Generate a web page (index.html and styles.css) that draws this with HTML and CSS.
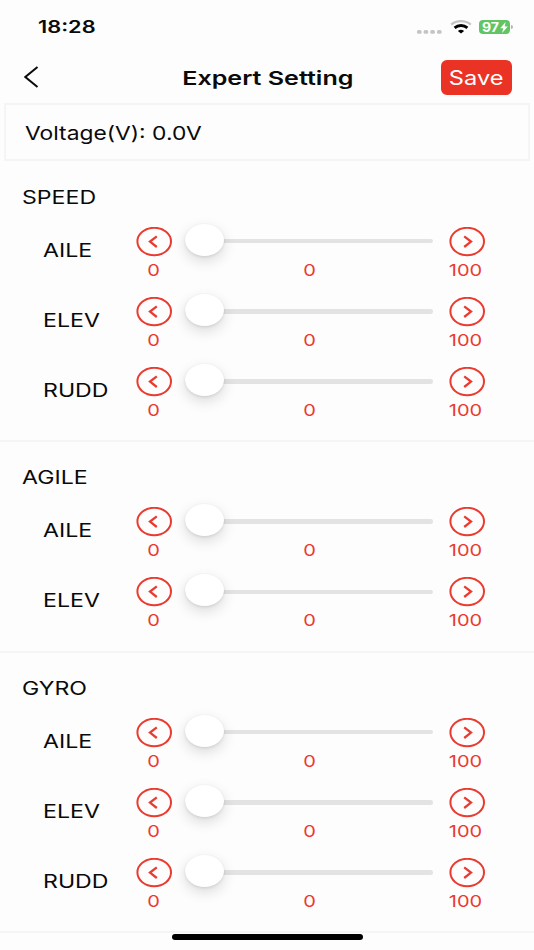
FILE: index.html
```html
<!DOCTYPE html>
<html lang="en">
<head>
    <meta charset="UTF-8">
    <meta name="viewport" content="width=device-width, initial-scale=1.0">
    <title>Expert Setting</title>
    <link rel="stylesheet" href="styles.css">
</head>
<body>
<svg class="symbols">
    <symbol id="icon-prev" viewBox="0 0 36 30">
        <ellipse cx="18.2" cy="14.5" rx="16.8" ry="13.7"/>
        <path d="M20.8 9.4L14 14.6l6.8 5.4" stroke-width="2.3"/>
    </symbol>
    <symbol id="icon-next" viewBox="0 0 36 30">
        <ellipse cx="18.2" cy="14.5" rx="16.8" ry="13.7"/>
        <path d="M15.2 9.400l6.800 5.200-6.800 5.400" stroke-width="2.3"/>
    </symbol>
</svg>

<div class="status-bar">
    <span class="time text">18:28</span>
    <div class="status-icons">
        <svg class="signal" width="25" height="4" viewBox="0 0 25 4">
            <rect x="0" y="0" width="4.600" height="3.800" rx="1.600"/>
            <rect x="6.600" y="0" width="4.600" height="3.800" rx="1.600"/>
            <rect x="13.300" y="0" width="4.600" height="3.800" rx="1.600"/>
            <rect x="20" y="0" width="4.600" height="3.800" rx="1.600"/>
        </svg>
        <svg class="wifi" width="22" height="14" viewBox="0 0 22 14">
            <path d="M1.200 4.600C6.500 0 15.500 0 20.800 4.600" stroke="#c4c4c6"/>
            <path d="M4.600 7.900C8.200 4.700 13.800 4.700 17.400 7.900" stroke="#000" stroke-width="2.800"/>
            <path d="M7.900 10.900Q11 8.600 14.100 10.900L11 13.600z" fill="#000"/>
        </svg>
        <div class="battery">
            <span class="battery-text text">97</span>
            <svg width="8" height="11" viewBox="0 0 8 11"><path d="M5.600 0L.2 6.200h3L2.100 11l5.700-6.500H4.700z" fill="#fff"/></svg>
        </div>
        <span class="battery-cap"></span>
    </div>
</div>

<div class="nav-bar">
    <svg class="back" width="15" height="22" viewBox="0 0 15 22"><path d="M13.500 1L1.300 11l12.200 10"/></svg>
    <h1 class="nav-title"><span class="text">Expert Setting</span></h1>
    <button class="save"><span class="text">Save</span></button>
</div>

<div class="voltage"><span class="text">Voltage(V): 0.0V</span></div>

<div class="section">
    <h2 class="section-title"><span class="text">SPEED</span></h2>
    <div class="row">
        <span class="label text">AILE</span>
        <div class="control">
            <svg class="step"><use href="#icon-prev"/></svg>
            <div class="slider"><span class="thumb"></span></div>
            <svg class="step"><use href="#icon-next"/></svg>
            <span class="value text">0</span><span class="value text">0</span><span class="value text">100</span>
        </div>
    </div>
    <div class="row">
        <span class="label text">ELEV</span>
        <div class="control">
            <svg class="step"><use href="#icon-prev"/></svg>
            <div class="slider"><span class="thumb"></span></div>
            <svg class="step"><use href="#icon-next"/></svg>
            <span class="value text">0</span><span class="value text">0</span><span class="value text">100</span>
        </div>
    </div>
    <div class="row">
        <span class="label text">RUDD</span>
        <div class="control">
            <svg class="step"><use href="#icon-prev"/></svg>
            <div class="slider"><span class="thumb"></span></div>
            <svg class="step"><use href="#icon-next"/></svg>
            <span class="value text">0</span><span class="value text">0</span><span class="value text">100</span>
        </div>
    </div>
</div>

<div class="section">
    <h2 class="section-title"><span class="text">AGILE</span></h2>
    <div class="row">
        <span class="label text">AILE</span>
        <div class="control">
            <svg class="step"><use href="#icon-prev"/></svg>
            <div class="slider"><span class="thumb"></span></div>
            <svg class="step"><use href="#icon-next"/></svg>
            <span class="value text">0</span><span class="value text">0</span><span class="value text">100</span>
        </div>
    </div>
    <div class="row">
        <span class="label text">ELEV</span>
        <div class="control">
            <svg class="step"><use href="#icon-prev"/></svg>
            <div class="slider"><span class="thumb"></span></div>
            <svg class="step"><use href="#icon-next"/></svg>
            <span class="value text">0</span><span class="value text">0</span><span class="value text">100</span>
        </div>
    </div>
</div>

<div class="section">
    <h2 class="section-title"><span class="text">GYRO</span></h2>
    <div class="row">
        <span class="label text">AILE</span>
        <div class="control">
            <svg class="step"><use href="#icon-prev"/></svg>
            <div class="slider"><span class="thumb"></span></div>
            <svg class="step"><use href="#icon-next"/></svg>
            <span class="value text">0</span><span class="value text">0</span><span class="value text">100</span>
        </div>
    </div>
    <div class="row">
        <span class="label text">ELEV</span>
        <div class="control">
            <svg class="step"><use href="#icon-prev"/></svg>
            <div class="slider"><span class="thumb"></span></div>
            <svg class="step"><use href="#icon-next"/></svg>
            <span class="value text">0</span><span class="value text">0</span><span class="value text">100</span>
        </div>
    </div>
    <div class="row">
        <span class="label text">RUDD</span>
        <div class="control">
            <svg class="step"><use href="#icon-prev"/></svg>
            <div class="slider"><span class="thumb"></span></div>
            <svg class="step"><use href="#icon-next"/></svg>
            <span class="value text">0</span><span class="value text">0</span><span class="value text">100</span>
        </div>
    </div>
</div>

<div class="home-indicator"></div>
</body>
</html>
```

FILE: styles.css
```css
* {
    box-sizing: border-box;
}
body {
    position: relative;
    margin: 0;
    height: 950px;
    overflow: hidden;
    background-color: #fdfdfd;
    color: #0a0a0a;
    font-family: Inter, "Liberation Sans", sans-serif;
    font-size: 18.5px;
}
.symbols {
    display: none;
}
/* wide lettering */
.text {
    display: inline-block;
    transform: scaleX(1.25);
    transform-origin: left center;
    white-space: nowrap;
}
.status-bar {
    display: flex;
    justify-content: space-between;
    height: 54px;
    padding: 0 21px 0 38px;
}
.time {
    font-size: 17px;
    font-weight: 600;
    line-height: 55px;
    transform: scaleX(1.28);
}
.status-icons {
    display: flex;
    align-items: center;
    height: 54px;
}
.signal {
    margin: 9px 8px 0 0;
    fill: #c4c4c6;
}
.wifi {
    margin-right: 7px;
    fill: none;
    stroke-width: 2.2;
}
.battery {
    display: flex;
    align-items: center;
    width: 31px;
    height: 14px;
    padding-left: 3px;
    border-radius: 4px;
    background-color: #62c565;
    color: #fff;
}
.battery-text {
    width: 18px;
    font-size: 13px;
    font-weight: 700;
    line-height: 14px;
    transform: scaleX(1.08);
}
.battery-cap {
    width: 2px;
    height: 4px;
    margin-left: 1px;
    border-radius: 0 2px 2px 0;
    background-color: #b5b5b5;
}
.nav-bar {
    display: flex;
    align-items: center;
    justify-content: space-between;
    height: 49px;
    padding: 0 22px 2px 24px;
}
.back {
    margin-top: -1px;
    fill: none;
    stroke: #0a0a0a;
    stroke-width: 2;
}
.nav-title {
    margin: 1px 0 0 55px;
    font-size: 19px;
    font-weight: 600;
}
.nav-title .text {
    transform: scaleX(1.32);
    transform-origin: center;
}
.save {
    width: 71px;
    height: 35px;
    padding: 0;
    border: 0;
    border-radius: 6px;
    background-color: #ea3324;
    color: #fff;
    font-family: inherit;
    font-size: 20px;
}
.save .text {
    transform: scaleX(1.18);
    transform-origin: center;
}
.voltage {
    height: 58px;
    margin: 0 4px 0.6px;
    padding-left: 19px;
    border: 2px solid #f5f5f5;
    font-size: 19px;
    line-height: 57px;
}
.voltage .text {
    transform: scaleX(1.2);
}
.section {
    padding-bottom: 15.2px;
    border-bottom: 2px solid #f5f5f5;
}
.section-title {
    height: 53px;
    margin: 0;
    padding-left: 22px;
    font-size: 18.5px;
    font-weight: 400;
    line-height: 71px;
}
.row {
    display: flex;
    height: 70.15px;
    padding-left: 43px;
}
.label {
    width: 93px;
    line-height: 70px;
}
.control {
    display: grid;
    grid-template-columns: 36px 248px 36px;
    grid-template-rows: 30px 27px;
    column-gap: 14px;
    padding-top: 12px;
}
.step {
    width: 36px;
    height: 30px;
    fill: none;
    stroke: #ea3b30;
    stroke-width: 2;
}
.step:nth-child(3) {
    margin-left: 1px;
}
.slider {
    align-self: center;
    display: flex;
    align-items: center;
    height: 4.6px;
    margin: -1px 1px 0 -1px;
    border-radius: 2.3px;
    background-color: #e3e3e3;
}
.thumb {
    flex: none;
    width: 39px;
    height: 32px;
    margin-top: -3px;
    border-radius: 50%;
    background-color: #fff;
    box-shadow: 0 5px 14px rgba(0,0,0,0.14), 0 1px 3px rgba(0,0,0,0.1);
}
.value {
    color: #ea3b30;
    font-size: 16px;
    line-height: 26px;
    text-align: center;
    transform-origin: center;
    margin-left: -1px;
}
.home-indicator {
    position: absolute;
    left: 172px;
    top: 934px;
    width: 191px;
    height: 6px;
    border-radius: 3px;
    background-color: #000;
}
```
